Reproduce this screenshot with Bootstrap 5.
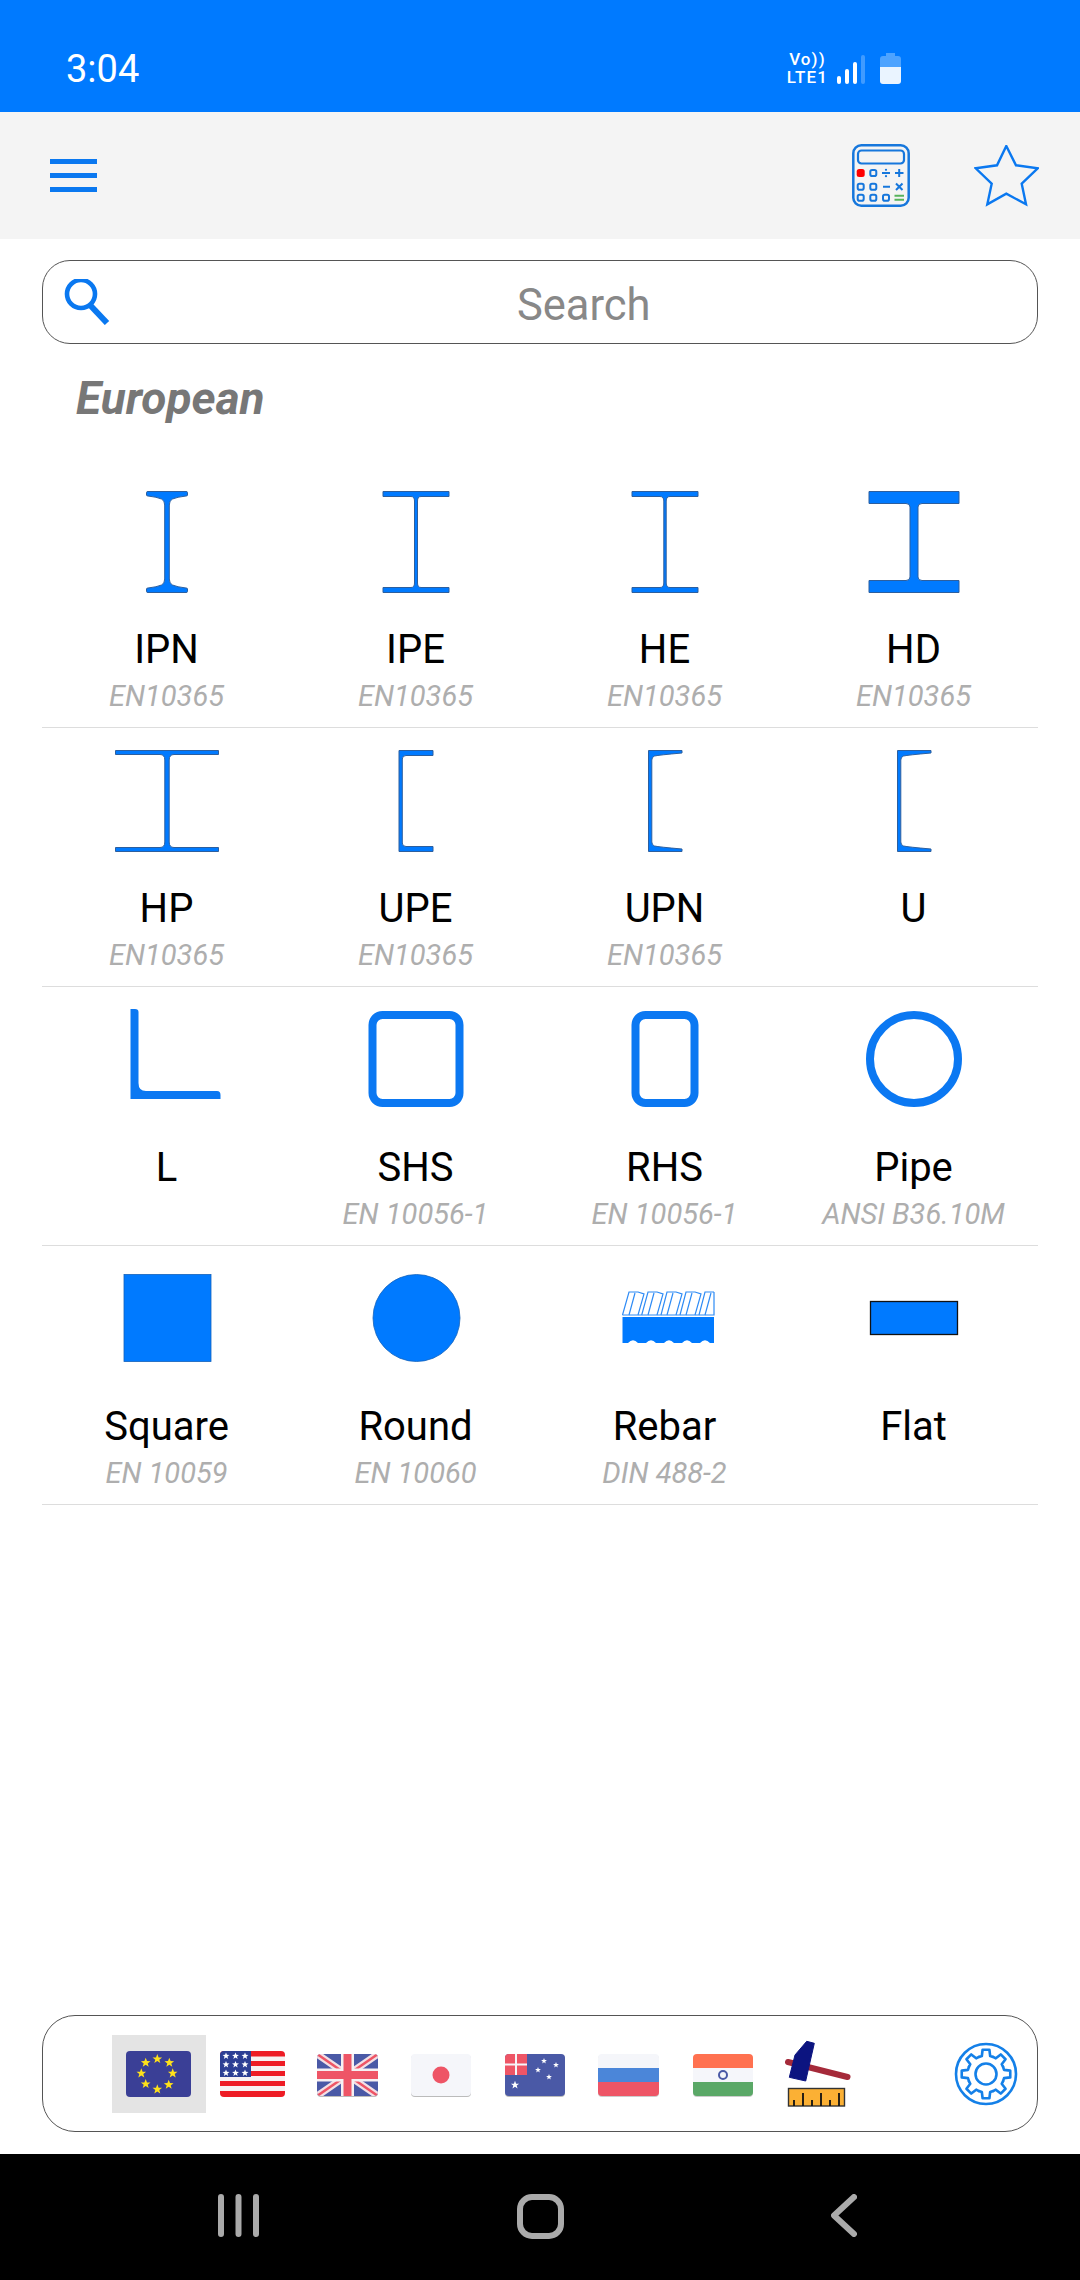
<!DOCTYPE html>
<html lang="en">
<head>
    <meta charset="UTF-8">
    <meta name="viewport" content="width=device-width, initial-scale=1.0">
    <title>Steel Sections</title>
    <link href="https://cdn.jsdelivr.net/npm/bootstrap@5.3.0/dist/css/bootstrap.min.css" rel="stylesheet">
    <style>
        body { font-family: Roboto, "Liberation Sans", sans-serif; background: #fff; }
        .app-page { width: 1080px; height: 2280px; }
        .status-strip { height: 112px; background: #007aff; color: #fff; padding: 24px 179px 0 66px; }
        .status-time { font-size: 38px; line-height: 1; margin-top: 2px; }
        .net-text { font-size: 17px; line-height: 18px; letter-spacing: 1.1px; font-weight: 500; text-align: center; margin: 0 9px 0 0; }
        .signal-bars { height: 29px; gap: 4px; margin-right: 15px; margin-top: 2px; }
        .signal-bars span { width: 4px; background: #fff; border-radius: 2px; }
        .tool-strip { height: 127px; background: #f4f4f4; padding: 0 41px 0 50px; }
        .calc-icon { margin-right: 64px; }
        .search-box { height: 84px; margin: 21px 42px 0; border: 1px solid #555; border-radius: 28px; padding-left: 19.5px; }
        .search-box input { font-size: 43.5px; height: 80px; margin: 6px 0 0 21px; padding: 0; border: 0; background: transparent; text-align: center; font-family: Roboto, sans-serif; }
        .search-box input::placeholder { color: #888; opacity: 1; }
        .group-title { font-size: 46px; font-weight: 700; font-style: italic; color: #777; line-height: 50px; margin: 29px 0 46px 76px; }
        .shape-grid { margin: 0 42px; }
        .shape-tile { height: 259px; padding-top: 16px; border-bottom: 1.5px solid #ddd; text-align: center; }
        .shape-tile svg { display: block; margin: 0 auto 29px; }
        .shape-name { font-size: 40px; line-height: 48px; color: #000; }
        .shape-norm { font-size: 29px; line-height: 34px; font-style: italic; color: #aeaeae; margin-top: 5px; }
        .beam { fill: #007aff; stroke: #2d5f9e; stroke-width: 1; }
        .angle { fill: #0b78f2; }
        .tube { fill: none; stroke: #0b78f2; stroke-width: 8; }
        .solid { fill: #007aff; stroke: #1362bb; stroke-width: .8; }
        .country-bar { height: 117px; margin: 0 42px 22px; border: 1px solid #555; border-radius: 33px; padding: 0 19.5px 0 69px; }
        .flag-item { width: 94px; height: 78px; }
        .flag-active { background: #e4e4e4; }
        .gear-icon { margin-left: auto; }
        .gear-line { fill: none; stroke: #1480e8; stroke-width: 2.6; stroke-linecap: round; stroke-linejoin: round; }
        .soft-keys { height: 126px; background: #000; padding: 40px 0 0 218px; }
        .key-home { margin-left: 258px; }
        .key-back { margin-left: 267px; }
        .key-line { fill: none; stroke: #aaa; stroke-width: 6; stroke-linecap: round; stroke-linejoin: round; }
    </style>
</head>
<body>
    <div class="app-page d-flex flex-column">
        <!-- status bar -->
        <div class="status-strip d-flex align-items-center">
            <div class="status-time">3:04</div>
            <div class="ms-auto d-flex align-items-center">
                <div class="net-text">Vo))<br>LTE1</div>
                <div class="signal-bars d-flex align-items-end">
                    <span class="h-25"></span>
                    <span class="h-50"></span>
                    <span class="h-75"></span>
                    <span class="h-100 opacity-25"></span>
                </div>
                <svg width="21" height="31" viewBox="0 0 21 31">
                    <path d="M6 0h9v3h3q3 0 3 3v8H0V6q0-3 3-3h3z" fill="#4da3ff"/>
                    <path d="M0 14h21v14q0 3-3 3H3q-3 0-3-3z" fill="#eaf4ff"/>
                </svg>
            </div>
        </div>

        <!-- toolbar -->
        <div class="tool-strip d-flex align-items-center">
            <svg width="47" height="33" viewBox="0 0 47 33">
                <rect width="47" height="5" y="0" fill="#0a78f0"/>
                <rect width="47" height="5" y="14" fill="#0a78f0"/>
                <rect width="47" height="5" y="28" fill="#0a78f0"/>
            </svg>
            <svg class="ms-auto calc-icon" width="58" height="63" viewBox="0 0 58 63">
                <rect x="1.3" y="1.3" width="55.4" height="60.4" rx="8" fill="none" stroke="#1677dc" stroke-width="2.5"/>
                <rect x="6" y="6.5" width="46" height="13" rx="3.5" fill="none" stroke="#1677dc" stroke-width="2.2"/>
                <rect x="4.7" y="25" width="8" height="8" rx="2.5" fill="#f00"/>
                <g fill="none" stroke="#1677dc" stroke-width="2">
                    <rect x="18.3" y="26" width="6" height="6" rx="1.8"/>
                    <rect x="5.7" y="39.7" width="6" height="6" rx="1.8"/>
                    <rect x="18.3" y="39.7" width="6" height="6" rx="1.8"/>
                    <rect x="5.7" y="50.7" width="6" height="6" rx="1.8"/>
                    <rect x="18.3" y="50.7" width="6" height="6" rx="1.8"/>
                    <rect x="31" y="50.7" width="6" height="6" rx="1.8"/>
                    <path d="M30 29h8M43 29h8.5M47.2 25v8M31 42.7h7M44 39.5l6.5 6.5M50.5 39.5L44 46"/>
                </g>
                <circle cx="34" cy="25.8" r="1.1" fill="#1677dc"/>
                <circle cx="34" cy="32.2" r="1.1" fill="#1677dc"/>
                <path d="M42.5 51.7h9.5M42.5 55.7h9.5" stroke="#57b35c" stroke-width="2" fill="none"/>
            </svg>
            <svg width="65" height="62" viewBox="-1 -1 65 62">
                <path d="M31.3 0L41 19.3 62.7 22.3 46.7 37.7 51 58.3 31.3 47.7 12.3 58.3 16.7 37.7 .7 22.3 22 19.3Z" fill="none" stroke="#0a78f0" stroke-width="2.4"/>
            </svg>
        </div>

        <!-- search -->
        <div class="search-box d-flex align-items-center">
            <svg width="47" height="46" viewBox="0 0 47 46" class="flex-shrink-0">
                <circle cx="18" cy="15" r="14" fill="none" stroke="#0a78f0" stroke-width="4.6"/>
                <path d="M27 26l17 18" fill="none" stroke="#0a78f0" stroke-width="6"/>
            </svg>
            <input type="text" class="form-control shadow-none" placeholder="Search">
        </div>

        <div class="group-title">European</div>

        <div class="shape-grid flex-grow-1">
            <div class="row g-0">
                <div class="col-3 shape-tile">
                    <svg width="112" height="112" viewBox="0 0 112 112"><path class="beam" d="M35.5 7.5Q35.5 6.5 37 6.5H75Q76.5 6.5 76.5 7.5V10Q76.5 11 75 11Q66 12 61.5 14Q58.3 15.5 58.3 20V94Q58.3 98.5 61.5 100Q66 102 75 103Q76.5 103 76.5 104V106.5Q76.5 107.5 75 107.5H37Q35.5 107.5 35.5 106.5V104Q35.5 103 37 103Q46 102 50.5 100Q53.7 98.5 53.7 94V20Q53.7 15.5 50.5 14Q46 12 37 11Q35.5 11 35.5 10Z"/></svg>
                    <div class="shape-name">IPN</div><div class="shape-norm">EN10365</div>
                </div>
                <div class="col-3 shape-tile">
                    <svg width="112" height="112" viewBox="0 0 112 112"><path class="beam" d="M23 6.5H89V11.5H61Q57.5 11.5 57.5 16V98Q57.5 102.5 61 102.5H89V107.5H23V102.5H51Q54.5 102.5 54.5 98V16Q54.5 11.5 51 11.5H23Z"/></svg>
                    <div class="shape-name">IPE</div><div class="shape-norm">EN10365</div>
                </div>
                <div class="col-3 shape-tile">
                    <svg width="112" height="112" viewBox="0 0 112 112"><path class="beam" d="M23 6.5H89V11.5H61Q57.2 11.5 57.2 16V98Q57.2 102.5 61 102.5H89V107.5H23V102.5H51Q54.8 102.5 54.8 98V16Q54.8 11.5 51 11.5H23Z"/></svg>
                    <div class="shape-name">HE</div><div class="shape-norm">EN10365</div>
                </div>
                <div class="col-3 shape-tile">
                    <svg width="112" height="112" viewBox="0 0 112 112"><path class="beam" d="M11 6.5H101V18.5H64Q60 18.5 60 22V92Q60 95.5 64 95.5H101V107.5H11V95.5H48Q52 95.5 52 92V22Q52 18.5 48 18.5H11Z"/></svg>
                    <div class="shape-name">HD</div><div class="shape-norm">EN10365</div>
                </div>

                <div class="col-3 shape-tile">
                    <svg width="112" height="112" viewBox="0 0 112 112"><path class="beam" d="M4.5 6.5H107.5V10.5H63Q58.2 10.5 58.2 16V98Q58.2 103.5 63 103.5H107.5V107.5H4.5V103.5H49Q53.8 103.5 53.8 98V16Q53.8 10.5 49 10.5H4.5Z"/></svg>
                    <div class="shape-name">HP</div><div class="shape-norm">EN10365</div>
                </div>
                <div class="col-3 shape-tile">
                    <svg width="112" height="112" viewBox="0 0 112 112"><path class="beam" d="M39 6.5H73V11.5H46Q42.3 11.5 42.3 15V99Q42.3 102.5 46 102.5H73V107.5H39Z"/></svg>
                    <div class="shape-name">UPE</div><div class="shape-norm">EN10365</div>
                </div>
                <div class="col-3 shape-tile">
                    <svg width="112" height="112" viewBox="0 0 112 112"><path class="beam" d="M39.5 6.5H73V9Q50 11 45.5 12Q42.8 13 42.8 16V98Q42.8 101 45.5 102Q50 103 73 105V107.5H39.5Z"/></svg>
                    <div class="shape-name">UPN</div><div class="shape-norm">EN10365</div>
                </div>
                <div class="col-3 shape-tile">
                    <svg width="112" height="112" viewBox="0 0 112 112"><path class="beam" d="M39.5 6.5H73V9Q50 11 45.5 12Q42.8 13 42.8 16V98Q42.8 101 45.5 102Q50 103 73 105V107.5H39.5Z"/></svg>
                    <div class="shape-name">U</div><div class="shape-norm">&nbsp;</div>
                </div>

                <div class="col-3 shape-tile">
                    <svg width="112" height="112" viewBox="0 0 112 112"><path class="angle" d="M19.5 6H24Q27.5 6 27.5 9V80Q27.5 88 35 88H106Q109.5 88 109.5 92V96H19.5Z"/></svg>
                    <div class="shape-name">L</div><div class="shape-norm">&nbsp;</div>
                </div>
                <div class="col-3 shape-tile">
                    <svg width="112" height="112" viewBox="0 0 112 112"><rect class="tube" x="12.5" y="12" width="87" height="88" rx="10"/></svg>
                    <div class="shape-name">SHS</div><div class="shape-norm">EN 10056-1</div>
                </div>
                <div class="col-3 shape-tile">
                    <svg width="112" height="112" viewBox="0 0 112 112"><rect class="tube" x="26.5" y="12" width="59" height="88" rx="10"/></svg>
                    <div class="shape-name">RHS</div><div class="shape-norm">EN 10056-1</div>
                </div>
                <div class="col-3 shape-tile">
                    <svg width="112" height="112" viewBox="0 0 112 112"><circle class="tube" cx="56" cy="56" r="44"/></svg>
                    <div class="shape-name">Pipe</div><div class="shape-norm">ANSI B36.10M</div>
                </div>

                <div class="col-3 shape-tile">
                    <svg width="112" height="112" viewBox="0 0 112 112"><rect class="solid" x="13" y="12.5" width="87" height="87"/></svg>
                    <div class="shape-name">Square</div><div class="shape-norm">EN 10059</div>
                </div>
                <div class="col-3 shape-tile">
                    <svg width="112" height="112" viewBox="0 0 112 112"><circle class="solid" cx="56.5" cy="56" r="43.5"/></svg>
                    <div class="shape-name">Round</div><div class="shape-norm">EN 10060</div>
                </div>
                <div class="col-3 shape-tile">
                    <svg width="112" height="112" viewBox="0 0 112 112">
                        <path fill="#007aff" d="M13.5 55H105V81H101Q96 75.5 91 81H83Q78 75.5 73 81H65Q60 75.5 55 81H47Q42 75.5 37 81H29Q24 75.5 19 81H13.5Z"/>
                        <g fill="none" stroke="#2e8bf5" stroke-width="1.2">
                            <path d="M13.5 53H105V30"/>
                            <path d="M13.5 53L20 30H29L35 32 29 53M20 53L26 31"/>
                            <path d="M32.7 53L39 30H48L54 32 48 53M39 53L45 31"/>
                            <path d="M52 53L58 30H67L73 32 67 53M58 53L64 31"/>
                            <path d="M71 53L77 30H86L92 32 86 53M77 53L83 31"/>
                            <path d="M90 53L96 30H105M96 53L102 31"/>
                        </g>
                    </svg>
                    <div class="shape-name">Rebar</div><div class="shape-norm">DIN 488-2</div>
                </div>
                <div class="col-3 shape-tile">
                    <svg width="112" height="112" viewBox="0 0 112 112"><rect x="12.5" y="39.5" width="87" height="33" fill="#007aff" stroke="#111" stroke-width="1.3"/></svg>
                    <div class="shape-name">Flat</div><div class="shape-norm">&nbsp;</div>
                </div>
            </div>
        </div>

        <!-- country selector -->
        <div class="country-bar d-flex align-items-center">
            <div class="flag-item flag-active">
                <svg width="94" height="78" viewBox="0 0 94 78">
                    <defs><polygon id="star5" points="0,-5 1.3,-1.6 4.8,-1.5 2,.7 3,4.1 0,2.1 -3,4.1 -2,.7 -4.8,-1.5 -1.3,-1.6"/></defs>
                    <rect x="14" y="16" width="65" height="46" rx="4" fill="#3a3f96"/>
                    <g fill="#ffe11a">
                        <use href="#star5" x="45.3" y="24"/><use href="#star5" x="57.3" y="27.7"/>
                        <use href="#star5" x="60.7" y="38.3"/><use href="#star5" x="56.7" y="49.7"/>
                        <use href="#star5" x="45.3" y="54.3"/><use href="#star5" x="33.7" y="49"/>
                        <use href="#star5" x="29.3" y="38.3"/><use href="#star5" x="33.7" y="27.7"/>
                    </g>
                </svg>
            </div>
            <div class="flag-item">
                <svg width="94" height="78" viewBox="0 0 94 78">
                    <defs><clipPath id="clipUs"><rect x="14" y="16" width="65" height="46" rx="4"/></clipPath></defs>
                    <g clip-path="url(#clipUs)">
                        <rect x="14" y="16" width="65" height="46" fill="#f7f2f2"/>
                        <path fill="#ee1c25" d="M14 16h65v5.5H14zM14 26h65v5H14zM14 36h65v5H14zM14 46h65v5H14zM14 56h65v6H14z"/>
                        <rect x="14" y="16" width="31" height="26" fill="#2d3f94"/>
                    </g>
                    <g fill="#fff">
                        <use href="#star5" transform="translate(20 21) scale(.72)"/><use href="#star5" transform="translate(29.5 21) scale(.72)"/><use href="#star5" transform="translate(39 21) scale(.72)"/>
                        <use href="#star5" transform="translate(20 29.5) scale(.72)"/><use href="#star5" transform="translate(29.5 29.5) scale(.72)"/><use href="#star5" transform="translate(39 29.5) scale(.72)"/>
                        <use href="#star5" transform="translate(20 38) scale(.72)"/><use href="#star5" transform="translate(29.5 38) scale(.72)"/><use href="#star5" transform="translate(39 38) scale(.72)"/>
                    </g>
                </svg>
            </div>
            <div class="flag-item">
                <svg width="94" height="78" viewBox="0 0 94 78">
                    <defs><clipPath id="clipUk"><rect x="17" y="19" width="61" height="42" rx="4"/></clipPath></defs>
                    <rect x="17" y="20" width="61" height="42" rx="4" fill="#bbb"/>
                    <g clip-path="url(#clipUk)">
                        <rect x="17" y="19" width="61" height="42" fill="#4a59a6"/>
                        <path d="M17 19L78 61M78 19L17 61" stroke="#f3dfe4" stroke-width="7"/>
                        <path d="M17 19L78 61M78 19L17 61" stroke="#ee5566" stroke-width="2.5"/>
                        <path d="M47.5 19V61M17 40H78" stroke="#f5f0f2" stroke-width="13"/>
                        <path d="M47.5 19V61M17 40H78" stroke="#ee5566" stroke-width="8"/>
                    </g>
                </svg>
            </div>
            <div class="flag-item">
                <svg width="94" height="78" viewBox="0 0 94 78">
                    <rect x="17" y="20" width="60" height="42" rx="4" fill="#bbb"/>
                    <rect x="17" y="19" width="60" height="42" rx="4" fill="#f5f6fa"/>
                    <circle cx="47" cy="40" r="8.5" fill="#ee5566"/>
                </svg>
            </div>
            <div class="flag-item">
                <svg width="94" height="78" viewBox="0 0 94 78">
                    <defs><clipPath id="clipAu"><rect x="17" y="19" width="60" height="42" rx="4"/></clipPath></defs>
                    <rect x="17" y="20" width="60" height="42" rx="4" fill="#bbb"/>
                    <g clip-path="url(#clipAu)">
                        <rect x="17" y="19" width="60" height="42" fill="#4a59a6"/>
                        <rect x="17" y="19" width="22" height="21" fill="#ee5566"/>
                        <path d="M28 19V40M17 29.5H39" stroke="#f5f6fa" stroke-width="2"/>
                    </g>
                    <g fill="#fff">
                        <use href="#star5" transform="translate(27 50) scale(.85)"/>
                        <use href="#star5" transform="translate(56 26) scale(.6)"/>
                        <use href="#star5" transform="translate(50 35) scale(.6)"/>
                        <use href="#star5" transform="translate(68 30) scale(.6)"/>
                        <use href="#star5" transform="translate(61 42) scale(.6)"/>
                    </g>
                </svg>
            </div>
            <div class="flag-item">
                <svg width="94" height="78" viewBox="0 0 94 78">
                    <defs><clipPath id="clipRu"><rect x="16" y="19" width="61" height="42" rx="4"/></clipPath></defs>
                    <rect x="16" y="20" width="61" height="42" rx="4" fill="#ccc"/>
                    <g clip-path="url(#clipRu)">
                        <rect x="16" y="19" width="61" height="14" fill="#f5f6fa"/>
                        <rect x="16" y="33" width="61" height="14" fill="#4b86d9"/>
                        <rect x="16" y="47" width="61" height="14" fill="#ee5566"/>
                    </g>
                </svg>
            </div>
            <div class="flag-item">
                <svg width="94" height="78" viewBox="0 0 94 78">
                    <defs><clipPath id="clipIn"><rect x="17" y="19" width="60" height="42" rx="4"/></clipPath></defs>
                    <rect x="17" y="20" width="60" height="42" rx="4" fill="#ccc"/>
                    <g clip-path="url(#clipIn)">
                        <rect x="17" y="19" width="60" height="14" fill="#ff7150"/>
                        <rect x="17" y="33" width="60" height="14" fill="#f5f6fa"/>
                        <rect x="17" y="47" width="60" height="14" fill="#5aa867"/>
                    </g>
                    <circle cx="47" cy="40" r="4" fill="none" stroke="#4a59a6" stroke-width="2"/>
                </svg>
            </div>
            <div class="flag-item">
                <svg width="94" height="78" viewBox="0 0 94 78">
                    <path d="M18 27L77.5 42" stroke="#a52a3a" stroke-width="6" stroke-linecap="round"/>
                    <path d="M36.7 6.3L44.3 8.3 35.7 46 19.3 42.3 25 20Z" fill="#0c1480" stroke="#0c1480" stroke-linejoin="round"/>
                    <rect x="18.5" y="53.5" width="56" height="17.5" fill="#fbb034" stroke="#333" stroke-width="1.4"/>
                    <path d="M24 71V65M33 71V58M42 71V65M51 71V58M60 71V65M69 71V58" stroke="#111" stroke-width="1.8"/>
                </svg>
            </div>
            <svg class="gear-icon" width="64" height="64" viewBox="-32 -32 64 64">
                <circle class="gear-line" r="30"/>
                <circle class="gear-line" r="10.5"/>
                <defs><path id="gearTooth" d="M-7.08 -17.09L-4.16 -18.03-3.41 -24.26H3.41L4.16 -18.03 7.08 -17.09"/></defs>
                <g class="gear-line">
                    <use href="#gearTooth"/><use href="#gearTooth" transform="rotate(45)"/>
                    <use href="#gearTooth" transform="rotate(90)"/><use href="#gearTooth" transform="rotate(135)"/>
                    <use href="#gearTooth" transform="rotate(180)"/><use href="#gearTooth" transform="rotate(225)"/>
                    <use href="#gearTooth" transform="rotate(270)"/><use href="#gearTooth" transform="rotate(315)"/>
                </g>
            </svg>
        </div>

        <!-- android keys -->
        <div class="soft-keys d-flex align-items-start">
            <svg width="41" height="43" viewBox="0 0 41 43"><path class="key-line" d="M3 3V40M20.5 3V40M38 3V40"/></svg>
            <svg class="key-home" width="47" height="45" viewBox="0 0 47 45"><rect class="key-line" x="3" y="3" width="41" height="39" rx="12"/></svg>
            <svg class="key-back" width="26" height="43" viewBox="0 0 26 43"><path class="key-line" d="M23 3L3 21.5 23 40"/></svg>
        </div>
    </div>
    <script src="https://cdn.jsdelivr.net/npm/bootstrap@5.3.0/dist/js/bootstrap.bundle.min.js"></script>
</body>
</html>
